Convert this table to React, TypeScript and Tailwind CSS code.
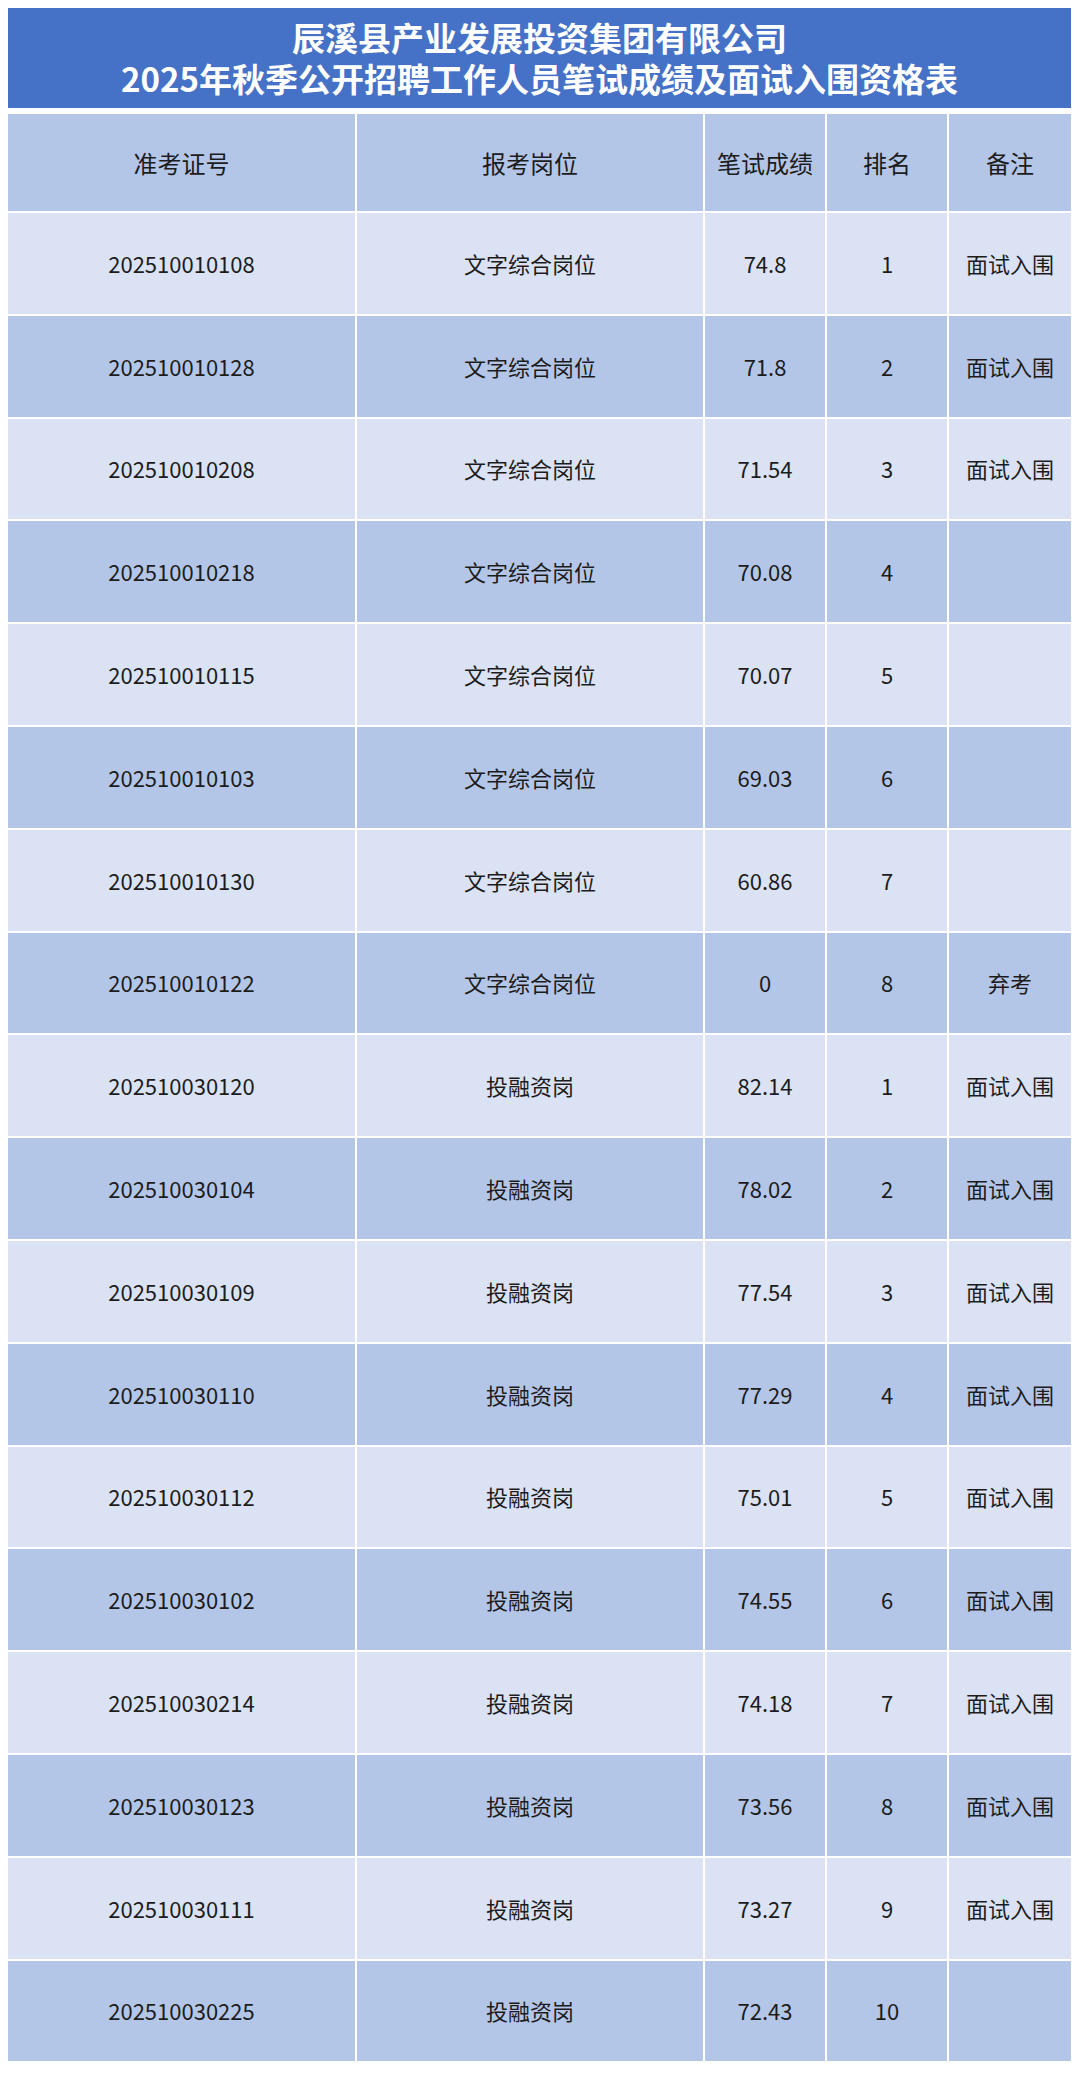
import React from 'react';

type Row = {
  id: string;
  post: string;
  score: string;
  rank: string;
  note: string;
};

const rows: Row[] = [
  { id: '202510010108', post: '文字综合岗位', score: '74.8', rank: '1', note: '面试入围' },
  { id: '202510010128', post: '文字综合岗位', score: '71.8', rank: '2', note: '面试入围' },
  { id: '202510010208', post: '文字综合岗位', score: '71.54', rank: '3', note: '面试入围' },
  { id: '202510010218', post: '文字综合岗位', score: '70.08', rank: '4', note: '' },
  { id: '202510010115', post: '文字综合岗位', score: '70.07', rank: '5', note: '' },
  { id: '202510010103', post: '文字综合岗位', score: '69.03', rank: '6', note: '' },
  { id: '202510010130', post: '文字综合岗位', score: '60.86', rank: '7', note: '' },
  { id: '202510010122', post: '文字综合岗位', score: '0', rank: '8', note: '弃考' },
  { id: '202510030120', post: '投融资岗', score: '82.14', rank: '1', note: '面试入围' },
  { id: '202510030104', post: '投融资岗', score: '78.02', rank: '2', note: '面试入围' },
  { id: '202510030109', post: '投融资岗', score: '77.54', rank: '3', note: '面试入围' },
  { id: '202510030110', post: '投融资岗', score: '77.29', rank: '4', note: '面试入围' },
  { id: '202510030112', post: '投融资岗', score: '75.01', rank: '5', note: '面试入围' },
  { id: '202510030102', post: '投融资岗', score: '74.55', rank: '6', note: '面试入围' },
  { id: '202510030214', post: '投融资岗', score: '74.18', rank: '7', note: '面试入围' },
  { id: '202510030123', post: '投融资岗', score: '73.56', rank: '8', note: '面试入围' },
  { id: '202510030111', post: '投融资岗', score: '73.27', rank: '9', note: '面试入围' },
  { id: '202510030225', post: '投融资岗', score: '72.43', rank: '10', note: '' },
];

const headers = ['准考证号', '报考岗位', '笔试成绩', '排名', '备注'];

function Cell({ children, dark, head }: { children: React.ReactNode; dark: boolean; head?: boolean }) {
  return (
    <div
      className={`flex items-center justify-center text-[#1c1c1c] ${dark ? 'bg-[#b4c6e7]' : 'bg-[#dae2f4]'} ${
        head ? 'h-[97px] text-[24px]' : 'h-[100.8px] text-[22px]'
      }`}
    >
      {children}
    </div>
  );
}

export default function App() {
  return (
    <div className="min-h-[2074px] bg-white pt-[8px] font-['Noto_Sans_CJK_SC','Noto_Sans',sans-serif]">
      <div className="mx-[8px] w-[1063px]">
        <div className="flex h-[100px] flex-col items-center justify-center bg-[#4571c6] text-[33px] font-bold leading-[41px] text-white">
          <div>辰溪县产业发展投资集团有限公司</div>
          <div>2025年秋季公开招聘工作人员笔试成绩及面试入围资格表</div>
        </div>
        <div className="mt-[6px] grid grid-cols-[347px_346px_120px_120px_122px] gap-[2px] bg-white">
          {headers.map((h) => (
            <Cell key={h} dark head>
              {h}
            </Cell>
          ))}
          {rows.map((r, i) => {
            const dark = i % 2 === 1;
            return (
              <React.Fragment key={r.id}>
                <Cell dark={dark}>{r.id}</Cell>
                <Cell dark={dark}>{r.post}</Cell>
                <Cell dark={dark}>{r.score}</Cell>
                <Cell dark={dark}>{r.rank}</Cell>
                <Cell dark={dark}>{r.note}</Cell>
              </React.Fragment>
            );
          })}
        </div>
      </div>
    </div>
  );
}
